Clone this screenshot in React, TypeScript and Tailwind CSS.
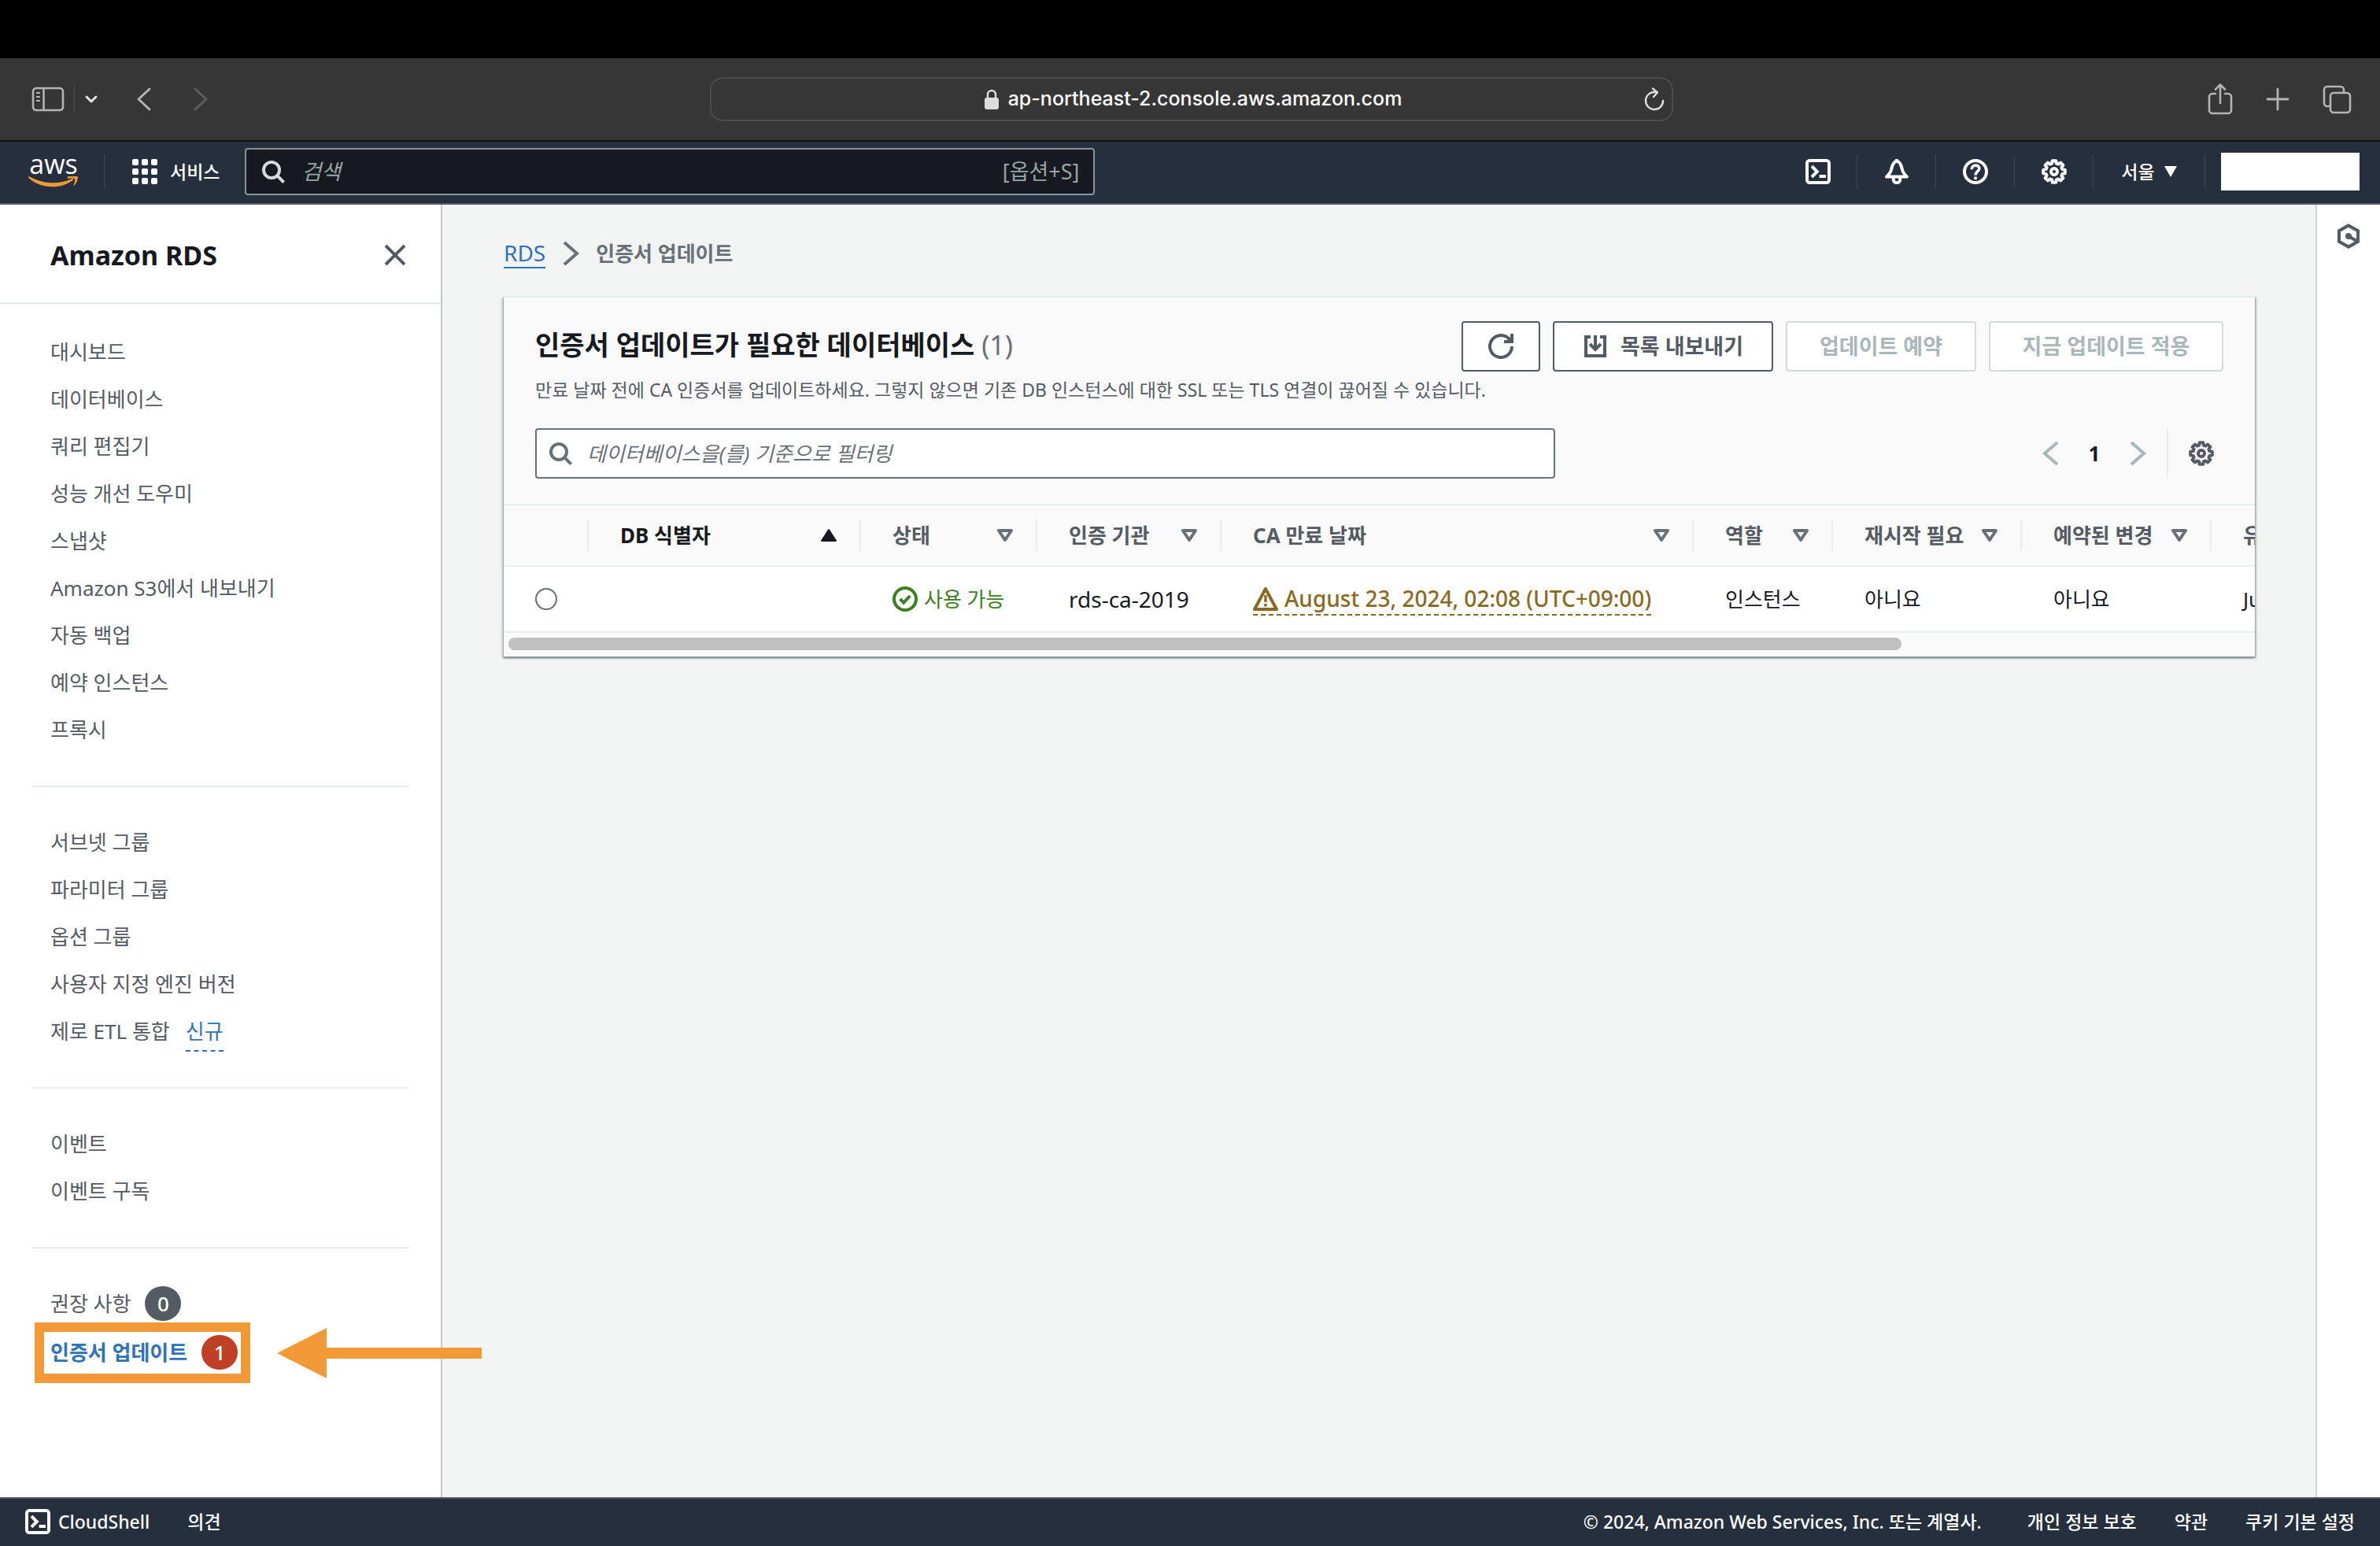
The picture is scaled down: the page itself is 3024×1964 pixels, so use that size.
import type { ReactNode } from "react";

interface IconProps {
  size?: number;
  className?: string;
  children?: ReactNode;
}

// every icon is drawn on a 16 unit grid with a 2 unit stroke
function Icon({ size = 32, className = "", children }: IconProps) {
  return (
    <svg
      width={size}
      height={size}
      viewBox="0 0 16 16"
      fill="none"
      stroke="currentColor"
      strokeWidth="2"
      className={`shrink-0 ${className}`}
      aria-hidden="true"
    >
      {children}
    </svg>
  );
}

// cog outline: eight teeth, four points for each
const gearPath = (() => {
  const pts: string[] = [];
  for (let i = 0; i < 8; i++) {
    const a = (i * Math.PI) / 4;
    for (const [d, r] of [[-0.27, 5.4], [-0.17, 7], [0.17, 7], [0.27, 5.4]]) {
      pts.push(`${(8 + r * Math.sin(a + d)).toFixed(2)} ${(8 - r * Math.cos(a + d)).toFixed(2)}`);
    }
  }
  return `M${pts.join("L")}Z`;
})();

const GearIcon = () => (
  <Icon>
    <path d={gearPath} strokeLinejoin="round" />
    <circle cx="8" cy="8" r="2" />
  </Icon>
);

const SearchIcon = ({ className }: { className?: string }) => (
  <Icon className={className}>
    <circle cx="7" cy="7" r="5" />
    <path d="m10.6 10.6 4.2 4.200" />
  </Icon>
);

const ShellIcon = () => (
  <Icon>
    <rect x="1" y="1" width="14" height="14" rx="1.6" />
    <path d="m4 4.6 3.4 3.4L4 11.4M8.8 11H13" />
  </Icon>
);

const SortIcon = ({ active }: { active?: boolean }) =>
  active ? (
    <svg width="22" height="18" viewBox="0 0 22 18" className="shrink-0" aria-hidden="true">
      <path d="M11 2 20 16H2Z" fill="currentColor" stroke="currentColor" strokeWidth="2" strokeLinejoin="round" />
    </svg>
  ) : (
    <svg width="22" height="18" viewBox="0 0 22 18" className="shrink-0 text-[#687078]" aria-hidden="true">
      <path d="M3 3H19L11 15Z" fill="none" stroke="currentColor" strokeWidth="4" strokeLinejoin="round" />
    </svg>
  );

interface NavItem {
  label: string;
  isNew?: boolean;
  count?: number;
  active?: boolean;
}

const navGroups: NavItem[][] = [
  [
    { label: "대시보드" },
    { label: "데이터베이스" },
    { label: "쿼리 편집기" },
    { label: "성능 개선 도우미" },
    { label: "스냅샷" },
    { label: "Amazon S3에서 내보내기" },
    { label: "자동 백업" },
    { label: "예약 인스턴스" },
    { label: "프록시" },
  ],
  [
    { label: "서브넷 그룹" },
    { label: "파라미터 그룹" },
    { label: "옵션 그룹" },
    { label: "사용자 지정 엔진 버전" },
    { label: "제로 ETL 통합", isNew: true },
  ],
  [{ label: "이벤트" }, { label: "이벤트 구독" }],
  [
    { label: "권장 사항", count: 0 },
    { label: "인증서 업데이트", count: 1, active: true },
  ],
];

const columns = [
  { label: "DB 식별자", width: "w-[346px]", sorted: true },
  { label: "상태", width: "w-[224px]" },
  { label: "인증 기관", width: "w-[234px]" },
  { label: "CA 만료 날짜", width: "w-[600px]" },
  { label: "역할", width: "w-[177px]" },
  { label: "재시작 필요", width: "w-[240px]" },
  { label: "예약된 변경", width: "w-[241px]" },
  { label: "유지 관리 기간", width: "w-[600px]" },
];

function BrowserBar() {
  return (
    <div className="flex h-[106px] items-center justify-between border-b-2 border-[#101214] bg-[#363636] px-10 text-[#b4b4b4]">
      <div className="flex flex-1 items-center">
        <button type="button" aria-label="사이드바">
          <svg width="42" height="32" viewBox="0 0 42 32" fill="none" stroke="currentColor" strokeWidth="2.6">
            <rect x="2" y="2" width="38" height="28" rx="4" />
            <path d="M15.5 2V30" />
            <path d="M6 8H11M6 13H11M6 18H11" strokeWidth="2" />
          </svg>
        </button>
        <span className="ml-3 h-9 w-px bg-[#505050]" />
        <button type="button" aria-label="탭 그룹" className="ml-3 text-[#e4e4e4]">
          <svg width="18" height="12" viewBox="0 0 18 12" fill="none" stroke="currentColor" strokeWidth="3" strokeLinecap="round" strokeLinejoin="round">
            <path d="m3 3 6 6 6-6" />
          </svg>
        </button>
        <button type="button" aria-label="뒤로" className="ml-12">
          <svg width="20" height="32" viewBox="0 0 20 32" fill="none" stroke="currentColor" strokeWidth="3" strokeLinecap="round" strokeLinejoin="round">
            <path d="M17 3 3 16l14 13" />
          </svg>
        </button>
        <button type="button" aria-label="앞으로" className="ml-13 text-[#5e5e5e]">
          <svg width="20" height="32" viewBox="0 0 20 32" fill="none" stroke="currentColor" strokeWidth="3" strokeLinecap="round" strokeLinejoin="round">
            <path d="m3 3 14 13L3 29" />
          </svg>
        </button>
      </div>
      <div className="flex h-14 w-[1224px] items-center rounded-2xl border-2 border-[#4c4c4c] px-2">
        <div className="flex flex-1 items-center justify-center gap-3 pl-8 font-['Inter','Noto_Sans_CJK_KR',sans-serif] text-[25px] font-medium text-white">
          <svg width="18" height="26" viewBox="0 0 18 26" className="text-[#dedede]">
            <path d="M4 12V7a5 5 0 0 1 10 0v5" fill="none" stroke="currentColor" strokeWidth="2.4" />
            <rect y="11" width="18" height="15" rx="3" fill="currentColor" />
          </svg>
          ap-northeast-2.console.aws.amazon.com
        </div>
        <button type="button" aria-label="새로 고침" className="text-[#dedede]">
          <svg width="28" height="30" viewBox="0 0 28 30" fill="none" stroke="currentColor" strokeWidth="2.4" strokeLinecap="round" strokeLinejoin="round">
            <path d="M25 17A11 11 0 1 1 16 6.2" />
            <path d="m12 1.5 6 5-5 5.5" />
          </svg>
        </button>
      </div>
      <div className="-mr-1 flex flex-1 items-center justify-end gap-[42px]">
        <button type="button" aria-label="공유">
          <svg width="32" height="42" viewBox="0 0 32 42" fill="none" stroke="currentColor" strokeWidth="2.6" strokeLinecap="round" strokeLinejoin="round">
            <path d="M10 14H6a4 4 0 0 0-4 4v17a4 4 0 0 0 4 4h20a4 4 0 0 0 4-4V18a4 4 0 0 0-4-4h-4" />
            <path d="M16 26V3M10 8.5 16 2.5l6 6" />
          </svg>
        </button>
        <button type="button" aria-label="새로운 탭">
          <svg width="30" height="30" viewBox="0 0 30 30" fill="none" stroke="currentColor" strokeWidth="2.8" strokeLinecap="round">
            <path d="M15 2V28M2 15H28" />
          </svg>
        </button>
        <button type="button" aria-label="탭 개요">
          <svg width="37" height="37" viewBox="0 0 37 37" fill="none" stroke="currentColor" strokeWidth="2.6">
            <path d="M10 27H6a4 4 0 0 1-4-4V6a4 4 0 0 1 4-4h17a4 4 0 0 1 4 4v4" />
            <rect x="10" y="10" width="25" height="25" rx="4" />
          </svg>
        </button>
      </div>
    </div>
  );
}

function TopNav() {
  return (
    <header className="flex h-20 items-center border-b-2 border-[#545b64] bg-[#262f3e] pb-0.5 text-white">
      <a href="#home" aria-label="aws" className="ml-9 flex w-16 flex-col items-center">
        <span className="h-7 font-['Open_Sans',sans-serif] text-[34px] leading-[24px] font-medium">aws</span>
        <svg width="64" height="16" viewBox="0 0 64 16" fill="#f09a37">
          <path d="M1 0C19 10 38 11 55 3.200c2-.9 3 .8 1.2 2C42 16 16 17 .4 2 0 1 0 0 1 0Z" />
          <path d="M50 .4C54-1.6 61-1.6 62.500 0c1.2 2-.5 8.5-4 11.5-.6.5-1.2.2-.9-.5 1-2.5 2-6 1.5-7.5-.8-1.300-5-1-8-.8-1.3.1-1.8-1.8-1.1-2.3Z" />
        </svg>
      </a>
      <span className="ml-8 h-11 w-px bg-[#414750]" />
      <button type="button" className="ml-[35px] flex items-center gap-4">
        <span className="grid grid-cols-3 gap-1">
          {Array.from({ length: 9 }, (_, i) => (
            <span key={i} className="size-2 rounded-[2px] bg-white" />
          ))}
        </span>
        <span className="text-[23px] font-medium">서비스</span>
      </button>
      <label className="ml-8 flex h-[60px] w-[1080px] items-center gap-5 rounded-sm border-2 border-[#879596] bg-[#16191f] px-[18px] text-[#95a5a6]">
        <SearchIcon className="text-[#d5dbdb]" />
        <input
          type="text"
          aria-label="검색"
          placeholder="검색"
          className="min-w-0 flex-1 bg-transparent text-[27px] outline-none placeholder:text-[#95a5a6] placeholder:italic"
        />
        <span className="text-[27px]">[옵션+S]</span>
      </label>
      <div className="ml-auto flex h-11 items-center">
        <button type="button" aria-label="CloudShell" className="grid h-11 w-[100px] place-items-center border-r border-[#414750]">
          <ShellIcon />
        </button>
        <button type="button" aria-label="알림" className="grid h-11 w-[100px] place-items-center border-r border-[#414750]">
          <Icon>
            <path d="M8 1.2C5.4 2 5 4.6 4.6 6.5 4.2 8.7 3 9.8 1.5 11.3H14.5C13 9.8 11.8 8.7 11.4 6.5 11 4.6 10.6 2 8 1.2Z" strokeLinejoin="round" />
            <path d="M8 0V2M5.9 12v1.2a2.1 1.9 0 0 0 4.2 0V12" />
          </Icon>
        </button>
        <button type="button" aria-label="지원" className="grid h-11 w-[100px] place-items-center border-r border-[#414750]">
          <Icon>
            <circle cx="8" cy="8" r="7" />
            <path d="M5.6 6.6C5.6 3.2 10.6 3.4 10.4 6.2 10.3 7.9 8 7.8 8 10.3M8 11.200V13" strokeWidth="1.8" />
          </Icon>
        </button>
        <button type="button" aria-label="설정" className="grid h-11 w-[100px] place-items-center border-r border-[#414750]">
          <GearIcon />
        </button>
        <button type="button" className="flex h-11 w-[142px] items-center justify-center gap-3 border-r border-[#414750] text-[23px] font-medium">
          서울
          <svg width="16" height="14" viewBox="0 0 16 14" fill="currentColor">
            <path d="M0 0H16L8 14Z" />
          </svg>
        </button>
        <div className="mr-[26px] ml-5 h-12 w-[176px] bg-white" />
      </div>
    </header>
  );
}

function Sidebar() {
  return (
    <aside className="w-[562px] shrink-0 border-r-2 border-[#c4c9ca] bg-white">
      <div className="flex h-[126px] items-center justify-between border-b-2 border-[#eaeded] pt-1 pr-[42px] pl-16">
        <h2 className="text-[34px] font-bold text-[#16191f]">
          <a href="#rds">Amazon RDS</a>
        </h2>
        <button type="button" aria-label="닫기" className="text-[#545b64]">
          <Icon>
            <path d="m2 2 12 12M14 2 2 14" />
          </Icon>
        </button>
      </div>
      <nav className="px-10 pt-[43px]">
        {navGroups.map((group, g) => (
          <ul
            key={g}
            className={`flex flex-col pl-6 ${g > 0 ? "mt-[53px] border-t-2 border-[#eaeded] pt-[52px]" : ""} ${
              g === 3 ? "gap-[26px]" : "gap-6"
            }`}
          >
            {group.map((item) => (
              <li key={item.label} className="relative flex h-9 items-center text-[26px] text-[#545b64]">
                <a href={`#${item.label}`} className={item.active ? "font-bold text-[#2e73b8]" : ""}>
                  {item.label}
                </a>
                {item.isNew && (
                  <button type="button" className="ml-5 h-11 self-start border-b-2 border-dashed border-[#2e73b8] pb-1.5 leading-9 text-[#2e73b8]">
                    신규
                  </button>
                )}
                {item.count !== undefined && (
                  <span
                    className={`ml-[18px] grid h-11 w-[46px] place-items-center rounded-full text-[26px] font-medium text-white ${
                      item.active ? "bg-[#bf4025]" : "bg-[#545b64]"
                    }`}
                  >
                    {item.count}
                  </span>
                )}
                {item.active && <Callout />}
              </li>
            ))}
          </ul>
        ))}
      </nav>
    </aside>
  );
}

// orange frame and arrow laid over the active link
function Callout() {
  return (
    <>
      <span className="pointer-events-none absolute top-[-20px] left-[-20px] h-[77px] w-[274px] border-12 border-[#f19a37]" />
      <svg width="260" height="64" viewBox="0 0 260 64" fill="#f19a37" className="pointer-events-none absolute top-[-13px] left-[288px]">
        <path d="M0 32 63 0V25H260V39H63V64Z" />
      </svg>
    </>
  );
}

function CertificateTable() {
  return (
    <div className="overflow-hidden">
      <table className="w-[2770px] table-fixed border-collapse text-left text-[26px] leading-9">
        <thead>
          <tr className="h-[78px] border-y-2 border-[#eaeded] text-[#545b64]">
            <th className="w-[108px] p-0">
              <span className="block h-10 border-r-2 border-[#eaeded]" />
            </th>
            {columns.map((col) => (
              <th key={col.label} scope="col" className={`p-0 font-bold ${col.width}`}>
                <button
                  type="button"
                  className={`flex h-10 w-full items-center justify-between border-r-2 border-[#eaeded] pr-7 pl-10 ${
                    col.sorted ? "text-[#16191f]" : ""
                  }`}
                >
                  {col.label}
                  <SortIcon active={col.sorted} />
                </button>
              </th>
            ))}
          </tr>
        </thead>
        <tbody>
          <tr className="h-[84px] border-b-2 border-[#eaeded] bg-white text-[#16191f]">
            <td className="pl-10">
              <input
                type="radio"
                name="db"
                aria-label="데이터베이스 선택"
                className="block size-7 appearance-none rounded-full border-2 border-[#687078] bg-white"
              />
            </td>
            <td />
            <td className="pl-10">
              <span className="flex items-center gap-2 whitespace-nowrap text-[#3a8120]">
                <Icon>
                  <circle cx="8" cy="8" r="7" />
                  <path d="m4.8 8 2.3 2.3 4-4.3" />
                </Icon>
                사용 가능
              </span>
            </td>
            <td className="pl-10 text-[28px]">rds-ca-2019</td>
            <td className="pl-10">
              <button
                type="button"
                className="flex items-center gap-2 border-b-2 border-dashed border-[#8a6a20] text-[28px] leading-10 font-medium whitespace-nowrap text-[#8a6a20]"
              >
                <Icon>
                  <path d="M8 2 15 15H1Z" strokeLinejoin="round" />
                  <path d="M8 6V10.5M8 11.500V13.3" strokeWidth="1.7" />
                </Icon>
                August 23, 2024, 02:08 (UTC+09:00)
              </button>
            </td>
            <td className="pl-10">인스턴스</td>
            <td className="pl-10">아니요</td>
            <td className="pl-10">아니요</td>
            <td className="pl-10">June 24, 2024</td>
          </tr>
        </tbody>
      </table>
      <div className="p-1.5 pb-2">
        <div className="h-4 w-[80%] rounded-full bg-[#c1c1c1]" />
      </div>
    </div>
  );
}

function CertificatePanel() {
  return (
    <section className="mt-[34px] border-t-2 border-[#eaeded] bg-[#fafafa] shadow-[0_2px_2px_0_#879596,2px_2px_2px_0_#00200040,-2px_2px_2px_0_#00200040]">
      <div className="flex justify-between px-10 pt-[30px]">
        <div>
          <h1 className="text-[34px] leading-[60px] font-bold text-[#16191f]">
            인증서 업데이트가 필요한 데이터베이스 <span className="font-normal text-[#687078]">(1)</span>
          </h1>
          <p className="text-[23px] leading-[54px] text-[#545b64]">
            만료 날짜 전에 CA 인증서를 업데이트하세요. 그렇지 않으면 기존 DB 인스턴스에 대한 SSL 또는 TLS 연결이 끊어질 수 있습니다.
          </p>
        </div>
        {/* the description may run under the buttons, so they take no width from it */}
        <div className="flex h-16 w-0 justify-end gap-4 text-[27px] font-bold whitespace-nowrap">
          <button type="button" aria-label="새로 고침" className="grid w-[100px] shrink-0 place-items-center rounded-sm border-2 border-[#545b64] bg-white text-[#545b64]">
            <Icon>
              <path d="M15 8A7 7 0 1 1 12.8 2.9L15 5" />
              <path d="M15 0V5H10" />
            </Icon>
          </button>
          <button type="button" className="flex w-[280px] shrink-0 items-center justify-center gap-4 rounded-sm border-2 border-[#545b64] bg-white text-[#545b64]">
            <Icon>
              <path d="M5 2H2V14H14V2H11M8 1V10M4.5 6.5 8 10l3.5-3.5" />
            </Icon>
            목록 내보내기
          </button>
          <button type="button" disabled className="w-[242px] shrink-0 rounded-sm border-2 border-[#d5dbdb] bg-white text-[#aab7b8]">
            업데이트 예약
          </button>
          <button type="button" disabled className="w-[298px] shrink-0 rounded-sm border-2 border-[#d5dbdb] bg-white text-[#aab7b8]">
            지금 업데이트 적용
          </button>
        </div>
      </div>
      <div className="flex items-center justify-between px-10 pt-[22px] pb-8">
        <label className="flex h-16 w-[1296px] items-center gap-[18px] rounded-sm border-2 border-[#687078] bg-white px-3.5 text-[#687078]">
          <SearchIcon />
          <input
            type="text"
            aria-label="필터"
            placeholder="데이터베이스을(를) 기준으로 필터링"
            className="min-w-0 flex-1 bg-transparent text-[26px] outline-none placeholder:text-[#687078] placeholder:italic"
          />
        </label>
        <div className="flex h-16 items-center">
          <button type="button" aria-label="이전 페이지" disabled className="text-[#aab7b8]">
            <Icon>
              <path d="M12 1 4 8l8 7" />
            </Icon>
          </button>
          <button type="button" className="w-[78px] text-[26px] font-bold text-[#16191f]">1</button>
          <button type="button" aria-label="다음 페이지" disabled className="text-[#aab7b8]">
            <Icon>
              <path d="m4 1 8 7-8 7" />
            </Icon>
          </button>
          <span className="ml-[21px] h-16 w-[2px] bg-[#eaeded]" />
          <button type="button" aria-label="환경설정" className="mr-3 ml-[26px] text-[#545b64]">
            <GearIcon />
          </button>
        </div>
      </div>
      <CertificateTable />
    </section>
  );
}

function Footer() {
  return (
    <footer className="flex h-[62px] items-center justify-between border-t-2 border-[#545b64] bg-[#262f3e] px-8 pb-0.5 text-[23px] font-medium text-white">
      <div className="flex items-center gap-12">
        <button type="button" className="flex items-center gap-2.5">
          <ShellIcon />
          CloudShell
        </button>
        <a href="#feedback">의견</a>
      </div>
      <div className="flex items-center gap-12">
        <span className="mr-2.5">© 2024, Amazon Web Services, Inc. 또는 계열사.</span>
        <a href="#privacy">개인 정보 보호</a>
        <a href="#terms">약관</a>
        <a href="#cookies">쿠키 기본 설정</a>
      </div>
    </footer>
  );
}

export default function App() {
  return (
    <div lang="ko" className="flex min-h-screen flex-col bg-[#f2f3f3] font-['Noto_Sans','Noto_Sans_CJK_KR',sans-serif]">
      <div className="h-[74px] bg-black" />
      <BrowserBar />
      <TopNav />
      <div className="flex flex-1">
        <Sidebar />
        <main className="min-w-0 flex-1 pt-[42px] pr-[77px] pl-[78px]">
          <nav aria-label="breadcrumb" className="flex h-10 items-center gap-4 text-[26px] leading-9">
            <a href="#rds" className="border-b-2 border-[#2e73b8] text-[28px] text-[#2e73b8]">RDS</a>
            <Icon className="text-[#687078]">
              <path d="m4 1 8 7-8 7" />
            </Icon>
            <span className="font-bold text-[#687078]">인증서 업데이트</span>
          </nav>
          <CertificatePanel />
        </main>
        <aside className="w-[82px] shrink-0 border-l-2 border-[#d0d4d4] bg-white pt-6">
          <button type="button" aria-label="도움말" className="mx-auto block text-[#545b64]">
            <Icon>
              <path d="M8 1.2 14 4.6V11.4L8 14.8 2 11.4V4.6Z" />
              <circle cx="8" cy="8" r="1" />
              <path d="m8 8 5.5 3.2" />
            </Icon>
          </button>
        </aside>
      </div>
      <Footer />
    </div>
  );
}
